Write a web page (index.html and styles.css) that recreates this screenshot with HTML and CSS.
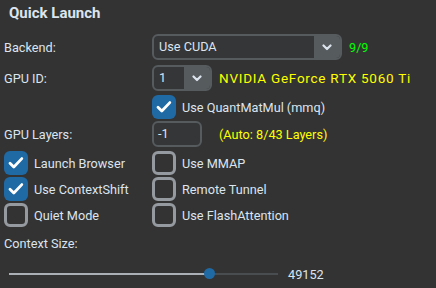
FILE: index.html
```html
<!DOCTYPE html>
<html>
<head>
<meta charset="utf-8">
<link rel="stylesheet" href="styles.css">
</head>
<body>
<div class="panel">
  <div class="title">Quick Launch</div>

  <div class="row r-backend">
    <div class="label">Backend:</div>
    <div class="combo wide">
      <span class="combo-text">Use CUDA</span>
      <span class="combo-btn"><svg width="10" height="7" viewBox="0 0 10 7"><path d="M1.5 1.5 L5 5 L8.5 1.5" fill="none" stroke="#dce4ee" stroke-width="2.2" stroke-linecap="round" stroke-linejoin="round"/></svg></span>
    </div>
    <span class="green">9/9</span>
  </div>

  <div class="row r-gpu">
    <div class="label">GPU ID:</div>
    <div class="combo narrow">
      <span class="combo-text">1</span>
      <span class="combo-btn"><svg width="10" height="7" viewBox="0 0 10 7"><path d="M1.5 1.5 L5 5 L8.5 1.5" fill="none" stroke="#dce4ee" stroke-width="2.2" stroke-linecap="round" stroke-linejoin="round"/></svg></span>
    </div>
    <span class="yellow gpu-name">NVIDIA GeForce RTX 5060 Ti</span>
  </div>

  <div class="row r-mmq">
    <div class="label"></div>
    <div class="check on"><span class="box"><svg width="24" height="24" viewBox="0 0 24 24"><path d="M6 12.2 L9.8 16 L17.8 7.6" fill="none" stroke="#ffffff" stroke-width="2.8" stroke-linecap="round" stroke-linejoin="round"/></svg></span><span class="ctext">Use QuantMatMul (mmq)</span></div>
  </div>

  <div class="row r-layers">
    <div class="label">GPU Layers:</div>
    <div class="entry">-1</div>
    <span class="yellow auto">(Auto: 8/43 Layers)</span>
  </div>

  <div class="row r-c1">
    <div class="col1"><div class="check on"><span class="box"><svg width="24" height="24" viewBox="0 0 24 24"><path d="M6 12.2 L9.8 16 L17.8 7.6" fill="none" stroke="#ffffff" stroke-width="2.8" stroke-linecap="round" stroke-linejoin="round"/></svg></span><span class="ctext">Launch Browser</span></div></div>
    <div class="check"><span class="box"></span><span class="ctext">Use MMAP</span></div>
  </div>

  <div class="row r-c">
    <div class="col1"><div class="check on"><span class="box"><svg width="24" height="24" viewBox="0 0 24 24"><path d="M6 12.2 L9.8 16 L17.8 7.6" fill="none" stroke="#ffffff" stroke-width="2.8" stroke-linecap="round" stroke-linejoin="round"/></svg></span><span class="ctext">Use ContextShift</span></div></div>
    <div class="check"><span class="box"></span><span class="ctext">Remote Tunnel</span></div>
  </div>

  <div class="row r-c">
    <div class="col1"><div class="check"><span class="box"></span><span class="ctext">Quiet Mode</span></div></div>
    <div class="check"><span class="box"></span><span class="ctext">Use FlashAttention</span></div>
  </div>

  <div class="ctx-label">Context Size:</div>

  <div class="slider-row">
    <div class="slider">
      <div class="track"><div class="fill" style="width:200px"></div></div>
      <div class="knob" style="left:200px"></div>
    </div>
    <span class="value">49152</span>
  </div>
</div>
</body>
</html>
```

FILE: styles.css
```css
html, body {
  margin: 0;
  padding: 0;
  background: #333333;
}
body {
  width: 436px;
  height: 288px;
  overflow: hidden;
  font-family: Roboto, "Liberation Sans", sans-serif;
  font-size: 12.7px;
  color: #dce4ee;
}
.panel {
  padding: 0 0 0 4px;
}
.title {
  font-weight: bold;
  font-size: 15px;
  padding: 4px 0 0 5px;
  height: 30px;
  line-height: 18px;
  box-sizing: border-box;
}
.row {
  display: flex;
  align-items: center;
}
.label {
  width: 148px;
  flex: none;
}
.r-backend { margin-top: 4px; height: 26px; }
.r-gpu { margin-top: 5px; height: 26px; }
.r-mmq { margin-top: 4px; height: 24px; }
.r-layers { margin-top: 2px; height: 26px; }
.r-c1 { margin-top: 4px; height: 24px; }
.r-c { margin-top: 2px; height: 24px; }
.col1 { width: 148px; flex: none; }

.combo {
  box-sizing: border-box;
  height: 26px;
  border: 2px solid #565b5e;
  border-radius: 6px;
  background: #343638;
  display: flex;
  align-items: stretch;
  overflow: hidden;
}
.combo.wide { width: 190px; }
.combo.narrow { width: 60px; }
.combo-text {
  flex: 1;
  padding-left: 5px;
  line-height: 22px;
}
.combo-btn {
  width: 26px;
  background: #565b5e;
  display: flex;
  align-items: center;
  justify-content: center;
}
.green {
  color: #00ff00;
  margin-left: 7px;
}
.yellow {
  color: #ffff00;
  margin-left: 7px;
}
.gpu-name {
  font-size: 13.5px;
  letter-spacing: 0.75px;
}
.yellow.auto { margin-left: 17px; }

.entry {
  box-sizing: border-box;
  width: 50px;
  height: 26px;
  border: 2px solid #565b5e;
  border-radius: 6px;
  background: #343638;
  padding-left: 4px;
  line-height: 22px;
}

.check {
  display: flex;
  align-items: center;
  height: 24px;
}
.box {
  box-sizing: border-box;
  width: 24px;
  height: 24px;
  border: 3px solid #949a9f;
  border-radius: 6px;
  flex: none;
}
.check.on .box {
  border: none;
  background: #1f6aa5;
}
.box svg { display: block; }
.ctext { margin-left: 6px; }

.ctx-label {
  margin-top: 7px;
  height: 20px;
  line-height: 20px;
}
.slider-row {
  display: flex;
  align-items: center;
  margin-top: 10px;
  height: 20px;
}
.slider {
  position: relative;
  width: 279px;
  height: 20px;
  flex: none;
}
.track {
  position: absolute;
  left: 5px;
  right: 5px;
  top: 9px;
  height: 2px;
  background: #4a4d50;
}
.fill {
  height: 2px;
  background: #aab0b5;
}
.knob {
  position: absolute;
  top: 4px;
  width: 11px;
  height: 11px;
  border-radius: 50%;
  background: #1f6aa5;
}
.value { margin-left: 5px; }
```
